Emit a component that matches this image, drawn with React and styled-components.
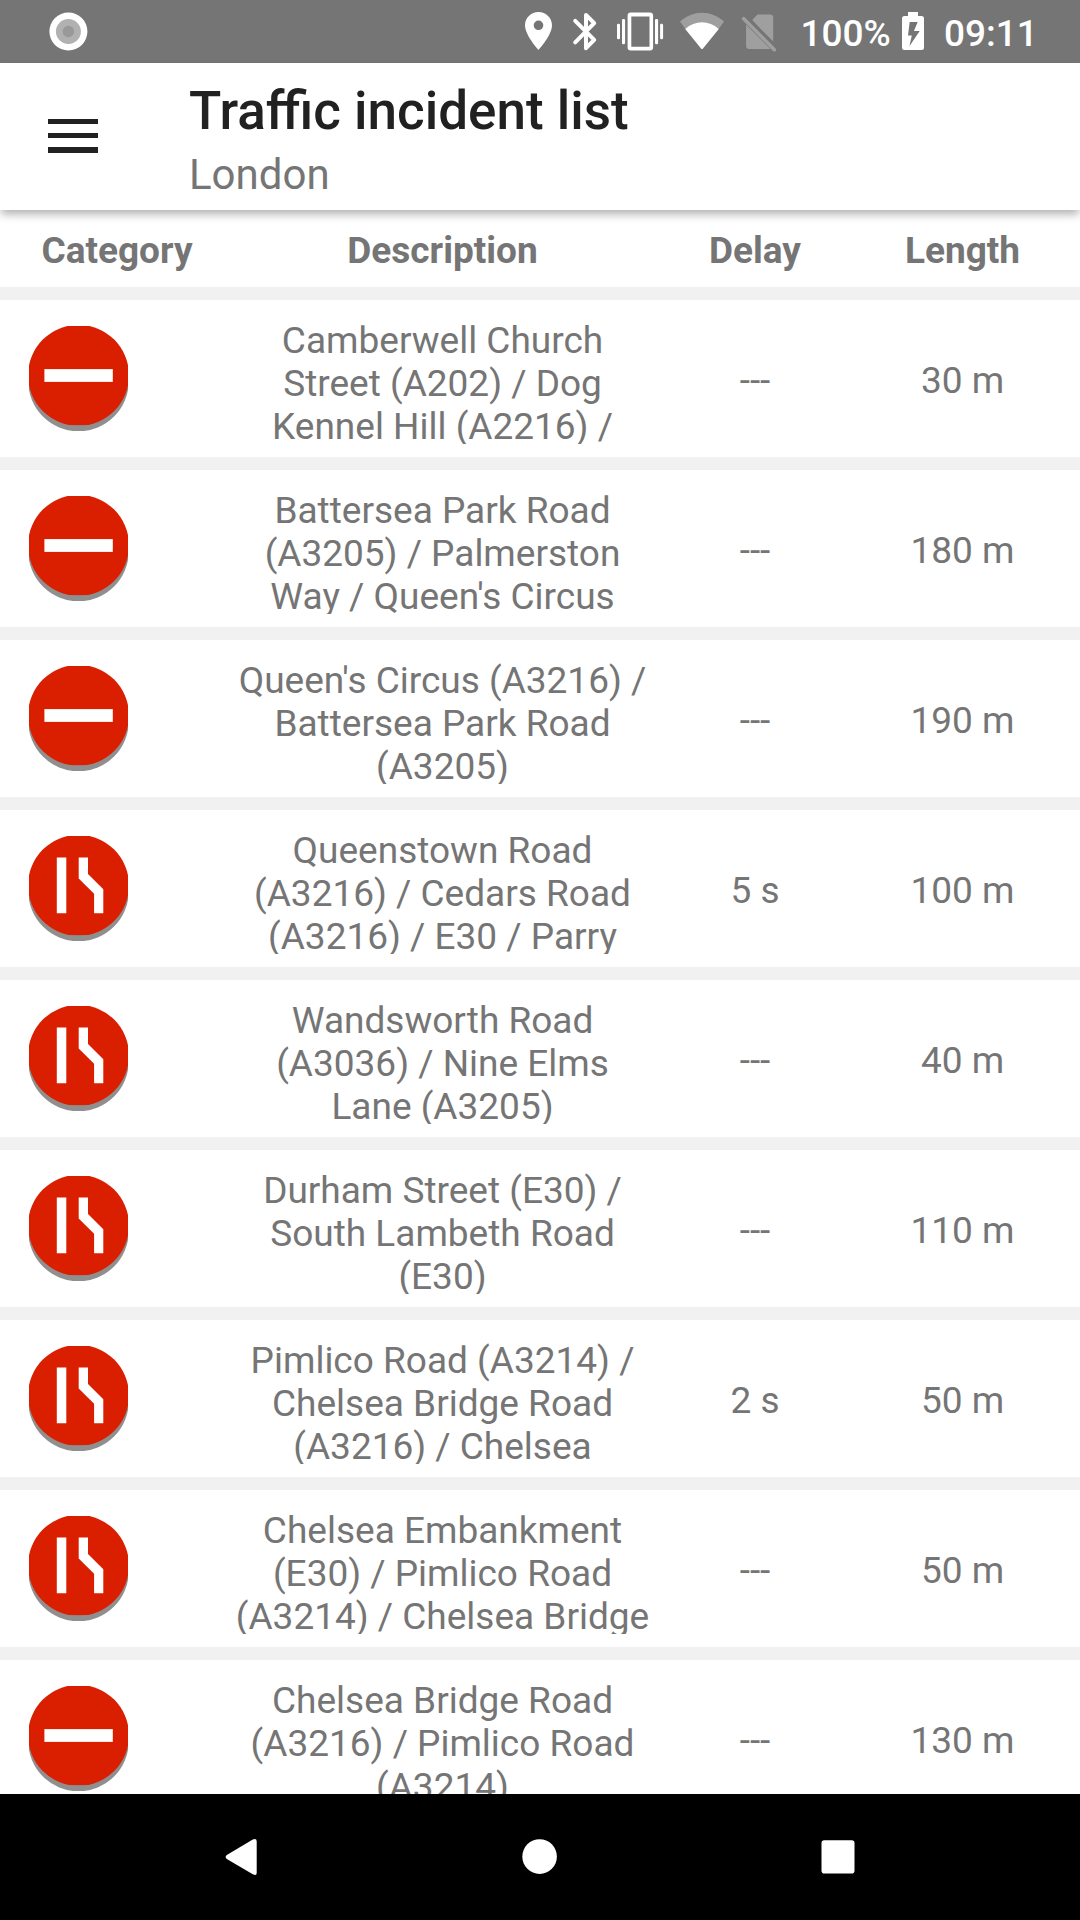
import React from "react";
import styled, { createGlobalStyle } from "styled-components";

const GlobalStyle = createGlobalStyle`
  * { box-sizing: border-box; }
  html, body { margin: 0; padding: 0; }
  body { font-family: Roboto, "Noto Sans", sans-serif; background: #fff; overflow: hidden; }
`;

const Screen = styled.div`
  display: flex;
  flex-direction: column;
  width: 1080px;
  height: 1920px;
  background: #fff;
  color: #757575;
  font-size: 37px;
  line-height: 43px;
`;

const StatusBar = styled.header`
  display: flex;
  flex: none;
  height: 63px;
  padding: 12px 49px 0 49px;
  background: #757575;
  color: #fff;
  font-weight: 500;
`;

const StatusSvg = styled.svg`
  display: block;
  flex: none;
  margin-left: ${(p) => p.$gap || 0}px;
  overflow: visible;
`;

const StatusText = styled.span`
  flex: none;
  width: ${(p) => p.$width}px;
  margin-left: ${(p) => p.$gap}px;
  white-space: nowrap;
`;

const Toolbar = styled.div`
  display: flex;
  flex: none;
  z-index: 1;
  height: 147px;
  padding-left: 48.4px;
  background: #fff;
  box-shadow: 0 5px 9px -1px rgba(0, 0, 0, 0.32);
`;

const MenuButton = styled.button`
  display: flex;
  flex-direction: column;
  gap: 9px;
  width: 49.2px;
  margin: 56px 91.4px 0 0;
  padding: 0;
  border: 0;
  background: none;
`;

const MenuLine = styled.span`
  height: 5.2px;
  background: #212121;
`;

const Titles = styled.div`
  display: flex;
  flex-direction: column;
`;

const Title = styled.h1`
  margin: 17px 0 0;
  color: #212121;
  font-size: 53px;
  font-weight: 500;
  line-height: 62px;
`;

const Subtitle = styled.div`
  margin-top: 8px;
  font-size: 42px;
  line-height: 49px;
`;

const Columns = styled.div`
  display: grid;
  grid-template-columns: 234px 417px 208px 207px;
  text-align: center;
`;

const TableHead = styled(Columns)`
  flex: none;
  height: 90px;
  padding-top: 19px;
  border-bottom: 13px solid #f1f1f1;
  font-weight: 700;
`;

const List = styled.main`
  flex: 1;
  min-height: 0;
  overflow: hidden;
`;

const Row = styled(Columns)`
  height: 170px;
  border-bottom: 13px solid #f1f1f1;
`;

const SignCell = styled.div`
  padding: 26px 0 0 29px;
`;

const Description = styled.div`
  height: 131px;
  margin-top: 13px;
  padding-top: 6px;
  overflow: hidden;
  white-space: pre;
`;

const Value = styled.div`
  padding-top: 59px;
`;

const NavBar = styled.nav`
  display: flex;
  flex: none;
  align-items: flex-start;
  height: 126px;
  padding: 44px 0 0 225px;
  background: #000;
`;

const NavSvg = styled.svg`
  display: block;
  margin-right: ${(p) => p.$after || 0}px;
`;

const incidents = [
  ["closed", "Camberwell Church\nStreet (A202) / Dog\nKennel Hill (A2216) /", "---", "30 m"],
  ["closed", "Battersea Park Road\n(A3205) / Palmerston\nWay / Queen's Circus", "---", "180 m"],
  ["closed", "Queen's Circus (A3216) /\nBattersea Park Road\n(A3205)", "---", "190 m"],
  ["lane", "Queenstown Road\n(A3216) / Cedars Road\n(A3216) / E30 / Parry", "5 s", "100 m"],
  ["lane", "Wandsworth Road\n(A3036) / Nine Elms\nLane (A3205)", "---", "40 m"],
  ["lane", "Durham Street (E30) /\nSouth Lambeth Road\n(E30)", "---", "110 m"],
  ["lane", "Pimlico Road (A3214) /\nChelsea Bridge Road\n(A3216) / Chelsea", "2 s", "50 m"],
  ["lane", "Chelsea Embankment\n(E30) / Pimlico Road\n(A3214) / Chelsea Bridge", "---", "50 m"],
  ["closed", "Chelsea Bridge Road\n(A3216) / Pimlico Road\n(A3214)", "---", "130 m"],
];

function Sign({ kind }) {
  return (
    <svg width="99" height="105" viewBox="0 0 99 105" display="block">
      <circle cx="49.5" cy="55" r="50.3" fill="#8f8f8f" />
      <svg width="99" height="99.3">
        <circle cx="49.5" cy="49.3" r="50.5" fill="#da1f00" />
      </svg>
      {kind === "closed" ? (
        <rect x="15.4" y="43.1" width="68.4" height="12.8" fill="#fff" />
      ) : (
        <path
          fill="#fff"
          d="M27.8 21.5h9.5v55.7h-9.5zM49.7 21.5h9.3v16.6l15.3 15.1v24h-9.2V57.8L49.7 42.4z"
        />
      )}
    </svg>
  );
}

export default function App() {
  return (
    <Screen>
      <GlobalStyle />
      <StatusBar>
        <StatusSvg width="39" height="39">
          <circle cx="19.4" cy="19.5" r="19" fill="#fff" />
          <circle cx="19.4" cy="19.5" r="12.5" fill="#b1b1b1" />
          <circle cx="19.4" cy="19.5" r="5.8" fill="#999" />
        </StatusSvg>
        <StatusSvg $gap={437} width="27" height="38" viewBox="5 2 14 20" preserveAspectRatio="none" fill="#fff">
          <path d="M12 2C8.13 2 5 5.13 5 9c0 5.25 7 13 7 13s7-7.75 7-13c0-3.87-3.13-7-7-7zm0 9.5a2.5 2.5 0 010-5 2.5 2.5 0 010 5z" />
        </StatusSvg>
        <StatusSvg $gap={21} width="24" height="39" fill="none" stroke="#fff" strokeWidth="4" strokeLinecap="round" strokeLinejoin="round">
          <path d="M2.2 8.8l19 19-8.2 8.4V3l8.2 8.2-19 19.2" />
        </StatusSvg>
        <StatusSvg $gap={20} width="46" height="39" fill="#fff">
          <path fillRule="evenodd" d="M13.8.5h19.1a3.2 3.2 0 013.2 3.2v31.6a3.2 3.2 0 01-3.2 3.2H13.8a3.2 3.2 0 01-3.2-3.2V3.7A3.2 3.2 0 0113.8.5zM14.3 4.4v30.4h18.2V4.4z" />
          <rect x="5" y="7" width="3.1" height="25.2" rx="1.3" />
          <rect x="0" y="11.8" width="3" height="15.4" rx="1.3" />
          <rect x="38" y="7" width="3.1" height="25.2" rx="1.3" />
          <rect x="43.1" y="11.8" width="3" height="15.4" rx="1.3" />
        </StatusSvg>
        <StatusSvg $gap={17} width="44" height="38">
          <path fill="#9f9f9f" d="M0 9.5C13-2.1 31-2.1 44 9.5l-5.4 7.5H5.4z" />
          <path fill="#fff" d="M5.2 16.9C14.9 8 29.1 8 38.8 16.9L23 36.4q-1 1.2-2 0z" />
        </StatusSvg>
        <StatusSvg $gap={18} width="34" height="39">
          <path fill="#9f9f9f" d="M15.5 2.6H28q3.2 0 3.2 3.2V32L10.2 8zM4.1 12.5L28.5 37H7.1q-3 0-3-3z" />
          <path d="M2.9 4.2L33 34.3" stroke="#757575" strokeWidth="4.4" />
          <path d="M1.7 6.7l30.6 31" stroke="#9f9f9f" strokeWidth="3.6" strokeLinecap="round" />
        </StatusSvg>
        <StatusText $gap={24.5} $width={88.5}>100%</StatusText>
        <StatusSvg $gap={13} width="22" height="38">
          <path fill="#fff" d="M6 0h10v4h3.5Q22 4 22 6.5V35.5Q22 38 19.5 38H2.5Q0 38 0 35.5V6.5Q0 4 2.5 4H6z" />
          <path fill="#757575" d="M7.7 10h8l-3.8 9h5.8L7.4 34.2l2.4-10.7H6z" />
        </StatusSvg>
        <StatusText $gap={20} $width={90}>09:11</StatusText>
      </StatusBar>

      <Toolbar>
        <MenuButton aria-label="Menu">
          <MenuLine />
          <MenuLine />
          <MenuLine />
        </MenuButton>
        <Titles>
          <Title>Traffic incident list</Title>
          <Subtitle>London</Subtitle>
        </Titles>
      </Toolbar>

      <TableHead>
        <span>Category</span>
        <span>Description</span>
        <span>Delay</span>
        <span>Length</span>
      </TableHead>

      <List>
        {incidents.map(([kind, road, delay, length]) => (
          <Row key={road}>
            <SignCell>
              <Sign kind={kind} />
            </SignCell>
            <Description>{road}</Description>
            <Value>{delay}</Value>
            <Value>{length}</Value>
          </Row>
        ))}
      </List>

      <NavBar>
        <NavSvg $after={265} width="32" height="38" fill="#fff">
          <path d="M1.8 17L27.8 1.5Q31.7 0 31.7 3.5V35Q31.7 38.3 27.8 36.3L1.8 21Q-.5 19 1.8 17z" />
        </NavSvg>
        <NavSvg $after={263} width="36" height="38" fill="#fff">
          <circle cx="17.6" cy="18.6" r="17.3" />
        </NavSvg>
        <NavSvg width="35" height="38" fill="#fff">
          <rect x=".5" y="2.3" width="33" height="33.2" rx="2.8" />
        </NavSvg>
      </NavBar>
    </Screen>
  );
}
